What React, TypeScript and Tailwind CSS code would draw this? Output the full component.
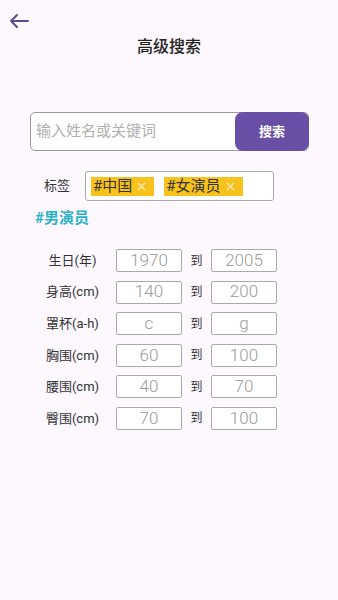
import React from "react";

const rows = [
  { label: "生日(年)", a: "1970", b: "2005" },
  { label: "身高(cm)", a: "140", b: "200" },
  { label: "罩杯(a-h)", a: "c", b: "g" },
  { label: "胸围(cm)", a: "60", b: "100" },
  { label: "腰围(cm)", a: "40", b: "70" },
  { label: "臀围(cm)", a: "70", b: "100" },
];

function Chip({ text }: { text: string }) {
  return (
    <div className="flex h-[19px] items-center bg-[#f8c21c] pl-[2px] pr-[8px]">
      <span className="text-[15px] leading-none text-[#333]">{text}</span>
      <svg width="9" height="9" viewBox="0 0 10 10" className="ml-[5px]">
        <path d="M1 1L9 9M9 1L1 9" stroke="#fff3d0" strokeWidth="1.3" />
      </svg>
    </div>
  );
}

export default function App() {
  return (
    <div
      className="min-h-screen w-full bg-[#fdf7fe]"
      style={{ fontFamily: 'Roboto, "Noto Sans CJK SC", "Noto Sans", sans-serif' }}
    >
      <div className="flex h-[42px] items-end pl-[9px] pb-[14px]">
        <svg width="20" height="14" viewBox="0 0 20 14" fill="none">
          <path
            d="M19 7H2M8 1L2 7L8 13"
            stroke="#5a4b8c"
            strokeWidth="2"
            strokeLinecap="round"
            strokeLinejoin="round"
          />
        </svg>
      </div>
      <div className="-mt-[2px] text-center text-[16px] font-medium leading-[14px] text-[#222]">
        高级搜索
      </div>

      <div className="ml-[30px] mt-[58px] flex h-[39px] w-[279px] items-stretch rounded-[5px] border border-[#9a9a9a] bg-white">
        <div className="flex flex-1 items-center pl-[5px] text-[15px] text-[#b0b0b0]">
          输入姓名或关键词
        </div>
        <div className="-my-px -mr-px flex w-[74px] items-center justify-center rounded-[8px] bg-[#6a4fa7] text-[13px] font-bold text-white">
          搜索
        </div>
      </div>

      <div className="mt-[20px] flex items-center">
        <div className="w-[85px] pl-[44px] text-left text-[13px] text-[#333]">标签</div>
        <div className="flex h-[30px] w-[189px] items-center gap-[10px] rounded-[3px] border border-[#aaa] bg-white pl-[5px]">
          <Chip text="#中国" />
          <Chip text="#女演员" />
        </div>
      </div>

      <div className="ml-[35px] mt-[7px] text-[15px] font-bold leading-[20px] text-[#2ab2c6]">
        #男演员
      </div>

      <div className="mt-[21px] flex flex-col gap-[8.6px]">
        {rows.map((r) => (
          <div key={r.label} className="flex h-[23px] items-center">
            <div className="w-[116px] pl-[29px] text-center text-[13px] text-[#333]">
              {r.label}
            </div>
            <div className="flex h-[23px] w-[66px] items-center justify-center rounded-[2px] border border-[#aaa] bg-white text-[17px] font-light text-[#9a9a9a]">
              {r.a}
            </div>
            <div className="w-[29px] text-center text-[12px] text-[#333]">到</div>
            <div className="flex h-[23px] w-[66px] items-center justify-center rounded-[2px] border border-[#aaa] bg-white text-[17px] font-light text-[#9a9a9a]">
              {r.b}
            </div>
          </div>
        ))}
      </div>
    </div>
  );
}
